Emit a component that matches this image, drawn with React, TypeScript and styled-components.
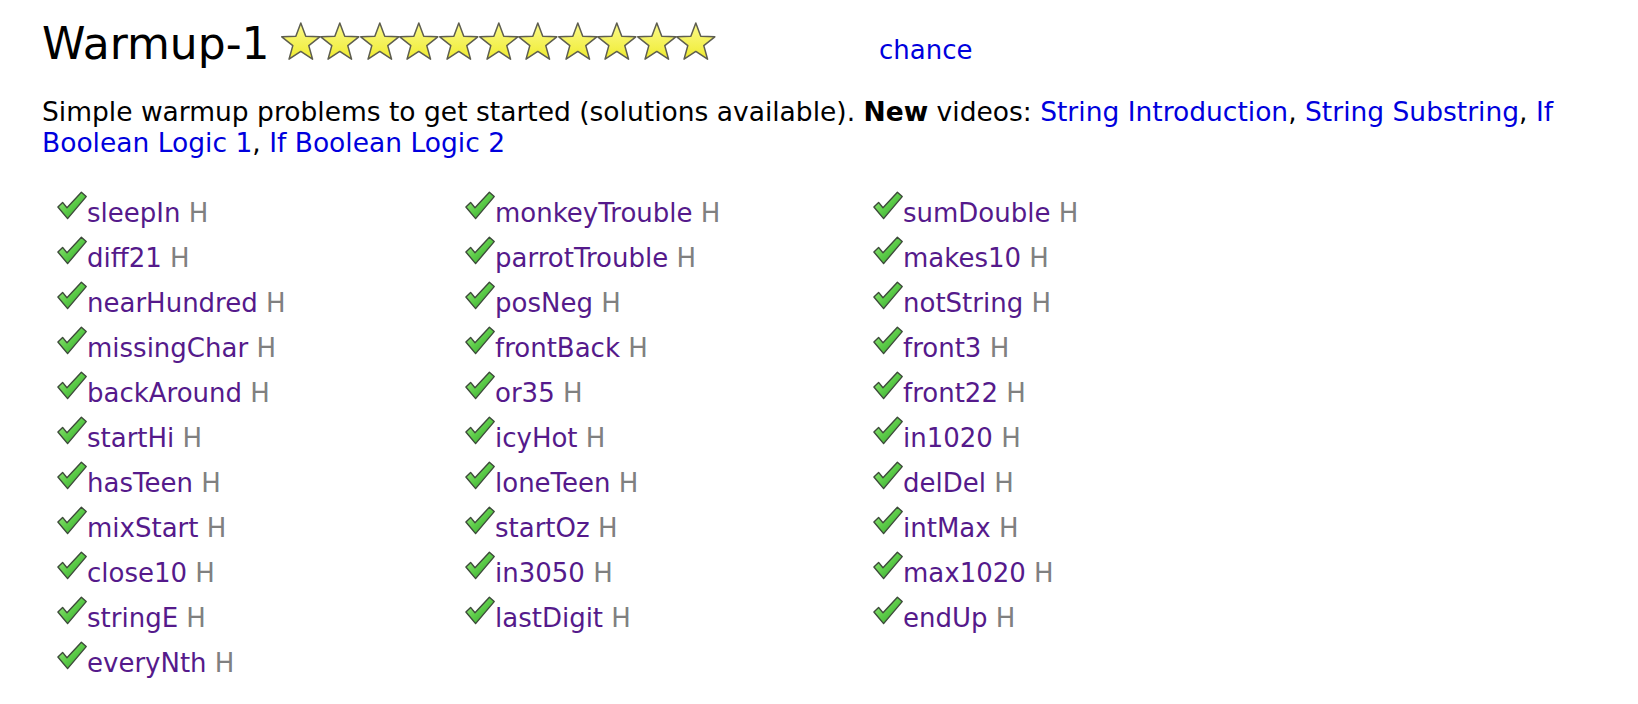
import React from "react";
import styled, { createGlobalStyle } from "styled-components";

const GlobalStyle = createGlobalStyle`
  html, body {
    margin: 0;
    padding: 0;
    background: #ffffff;
  }
  body {
    font-family: "DejaVu Sans", Verdana, sans-serif;
    color: #000000;
  }
`;

const Page = styled.div`
  padding: 14px 0 0 42px;
`;

const TitleLine = styled.h1`
  margin: 0;
  font-size: 44px;
  line-height: 60px;
  font-weight: normal;
  white-space: nowrap;
`;

const StarRow = styled.span`
  display: inline;
  margin-left: -3px;
`;

const StarSvg = styled.svg`
  width: 39.6px;
  height: 38px;
  vertical-align: -1px;
  overflow: visible;
`;

const ChanceLink = styled.a`
  font-size: 26px;
  color: #0000dd;
  text-decoration: none;
  margin-left: 163px;
`;

const Description = styled.p`
  margin: 16px 0 0;
  font-size: 26.5px;
  line-height: 31px;
  max-width: 1575px;
`;

const VideoLink = styled.a`
  color: #0000dd;
  text-decoration: none;
`;

const ProblemGrid = styled.div`
  display: grid;
  grid-template-columns: repeat(3, 408px);
  margin-top: 33px;
  padding-left: 15px;
`;

const ProblemColumn = styled.div`
  display: flex;
  flex-direction: column;
`;

const ProblemRow = styled.div`
  font-size: 26px;
  line-height: 45px;
  white-space: nowrap;
`;

const CheckSvg = styled.svg`
  width: 30px;
  height: 29px;
  vertical-align: 2px;
  overflow: visible;
`;

const ProblemLink = styled.a`
  color: #551a8b;
  text-decoration: none;
`;

const HintMark = styled.span`
  color: #808080;
`;

const STAR_POINTS =
  "19.8,1 24.74,14.2 38.82,14.82 27.79,23.6 31.56,37.18 19.8,29.4 8.04,37.18 11.81,23.6 0.78,14.82 14.86,14.2";

const Star: React.FC<{ id: number }> = ({ id }) => (
  <StarSvg viewBox="0 0 39.6 38" aria-hidden="true">
    <defs>
      <linearGradient id={`sg${id}`} x1="0" y1="0" x2="0" y2="1">
        <stop offset="0" stopColor="#fbfa8a" />
        <stop offset="1" stopColor="#efeb30" />
      </linearGradient>
    </defs>
    <polygon
      points={STAR_POINTS}
      fill={`url(#sg${id})`}
      stroke="#5e5e50"
      strokeWidth="1.5"
      strokeLinejoin="round"
    />
  </StarSvg>
);

const Check: React.FC<{ id: string }> = ({ id }) => (
  <CheckSvg viewBox="0 0 30 29" aria-hidden="true">
    <defs>
      <linearGradient id={`cg${id}`} x1="0" y1="0" x2="1" y2="1">
        <stop offset="0" stopColor="#a6ec8a" />
        <stop offset="0.5" stopColor="#5ccc48" />
        <stop offset="1" stopColor="#2f9a2c" />
      </linearGradient>
    </defs>
    <polygon
      points="0.9,16 5.6,11.4 10,16.8 24.4,1.2 29.2,5.6 10.6,27.6"
      fill={`url(#cg${id})`}
      stroke="#3d4a3a"
      strokeWidth="1.4"
      strokeLinejoin="round"
    />
  </CheckSvg>
);

const columns: string[][] = [
  [
    "sleepIn",
    "diff21",
    "nearHundred",
    "missingChar",
    "backAround",
    "startHi",
    "hasTeen",
    "mixStart",
    "close10",
    "stringE",
    "everyNth",
  ],
  [
    "monkeyTrouble",
    "parrotTrouble",
    "posNeg",
    "frontBack",
    "or35",
    "icyHot",
    "loneTeen",
    "startOz",
    "in3050",
    "lastDigit",
  ],
  [
    "sumDouble",
    "makes10",
    "notString",
    "front3",
    "front22",
    "in1020",
    "delDel",
    "intMax",
    "max1020",
    "endUp",
  ],
];

export default function App() {
  return (
    <>
      <GlobalStyle />
      <Page>
        <TitleLine>
          Warmup-1{" "}
          <StarRow>
            {Array.from({ length: 11 }).map((_, i) => (
              <Star key={i} id={i} />
            ))}
          </StarRow>
          <ChanceLink href="#">chance</ChanceLink>
        </TitleLine>
        <Description>
          Simple warmup problems to get started (solutions available).{" "}
          <b>New</b> videos: <VideoLink href="#">String Introduction</VideoLink>,{" "}
          <VideoLink href="#">String Substring</VideoLink>,{" "}
          <VideoLink href="#">If</VideoLink>{" "}
          <VideoLink href="#">Boolean Logic 1</VideoLink>,{" "}
          <VideoLink href="#">If Boolean Logic 2</VideoLink>
        </Description>
        <ProblemGrid>
          {columns.map((col, ci) => (
            <ProblemColumn key={ci}>
              {col.map((name) => (
                <ProblemRow key={name}>
                  <Check id={name} />
                  <ProblemLink href="#">{name}</ProblemLink>{" "}
                  <HintMark>H</HintMark>
                </ProblemRow>
              ))}
            </ProblemColumn>
          ))}
        </ProblemGrid>
      </Page>
    </>
  );
}
